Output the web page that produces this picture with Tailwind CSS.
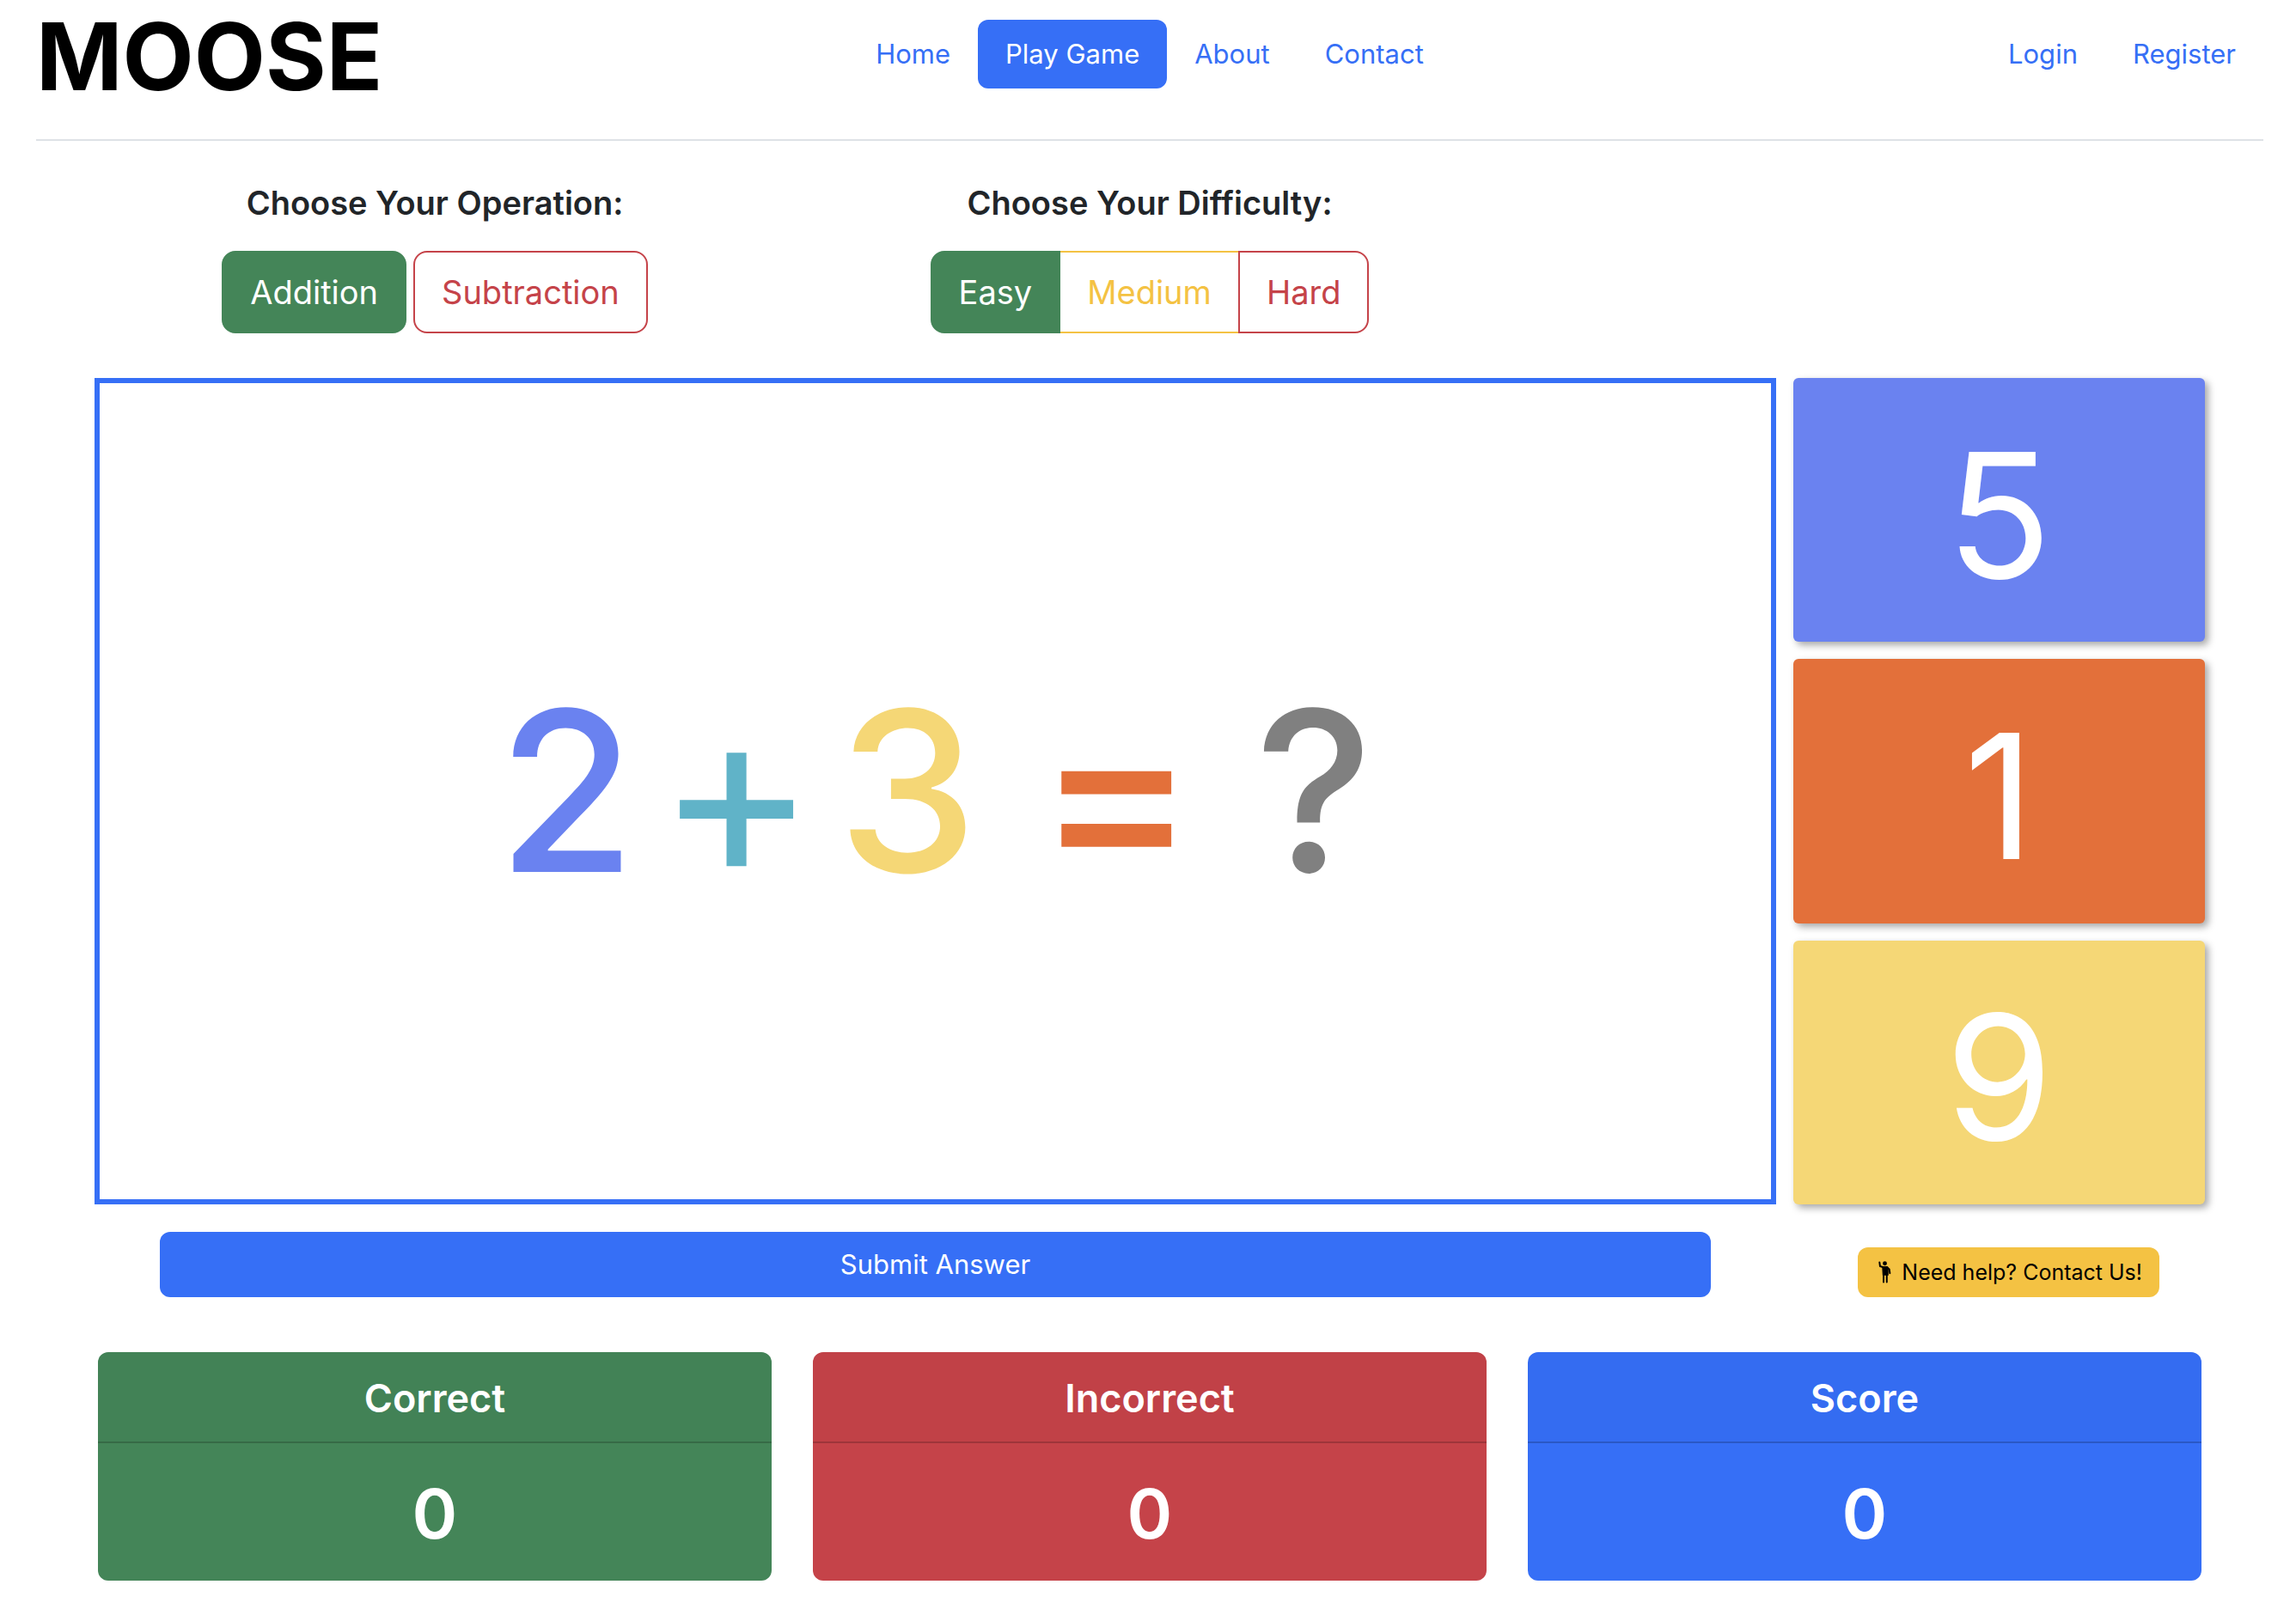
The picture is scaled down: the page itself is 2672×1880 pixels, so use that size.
<!DOCTYPE html>
<html lang="en">
<head>
<meta charset="utf-8">
<meta name="viewport" content="width=device-width, initial-scale=1">
<title>MOOSE - Play Game</title>
<script src="https://cdn.jsdelivr.net/npm/@tailwindcss/browser@4"></script>
</head>
<body class="bg-white pr-[38px] pb-10 pl-[42px] font-['Inter',sans-serif] text-[#212529]">

<header class="grid grid-cols-[1fr_auto_1fr] items-start border-b-2 border-[#dee2e6] pb-[30px]">
  <h1 class="text-[108px] leading-[132px] font-bold text-black">MOOSE</h1>
  <nav class="mt-[23px] flex text-[31px] leading-[48px] text-[#366ff6]" aria-label="Main">
    <a href="#" class="rounded-xl px-8 py-4">Home</a>
    <a href="#" class="rounded-xl bg-[#366ff6] px-8 py-4 text-white" aria-current="page">Play Game</a>
    <a href="#" class="rounded-xl px-8 py-4">About</a>
    <a href="#" class="rounded-xl px-8 py-4">Contact</a>
  </nav>
  <nav class="mt-[23px] flex justify-end text-[31px] leading-[48px] text-[#366ff6]" aria-label="Account">
    <a href="#" class="px-8 py-4">Login</a>
    <a href="#" class="px-8 py-4">Register</a>
  </nav>
</header>

<main>
  <section class="mx-12 mt-12 grid grid-cols-3 text-center">
    <div>
      <h2 class="text-[38px] leading-[48px] font-semibold">Choose Your Operation:</h2>
      <div class="mt-8 flex justify-center gap-2 text-[38px] leading-[60px]">
        <button type="button" class="rounded-2xl border-2 border-[#448558] bg-[#448558] px-[31px] py-4 text-white">Addition</button>
        <button type="button" class="rounded-2xl border-2 border-[#c54349] px-[31px] py-4 text-[#c54349]">Subtraction</button>
      </div>
    </div>
    <div>
      <h2 class="text-[38px] leading-[48px] font-semibold">Choose Your Difficulty:</h2>
      <div class="mt-8 flex justify-center text-[38px] leading-[60px]">
        <button type="button" class="z-10 rounded-l-2xl border-2 border-[#448558] bg-[#448558] px-[31px] py-4 text-white">Easy</button>
        <button type="button" class="-ml-0.5 border-2 border-[#f4c243] px-[31px] py-4 text-[#f4c243]">Medium</button>
        <button type="button" class="-ml-0.5 rounded-r-2xl border-2 border-[#c54349] px-[31px] py-4 text-[#c54349]">Hard</button>
      </div>
    </div>
  </section>

  <section class="mx-[68px] mt-[52px] grid grid-cols-[1957fr_479fr] gap-x-5 gap-y-8">
    <div class="flex items-center justify-center gap-[68px] border-6 border-[#366ff6] text-[260px] leading-none font-medium">
      <div class="flex items-center gap-[25px]">
        <span class="text-[#6a82f0]">2</span>
        <span class="text-[280px] font-normal text-[#60b3c8]">+</span>
        <span class="text-[#f5d776]">3</span>
      </div>
      <span class="text-[280px] text-[#e3703a]">=</span>
      <span class="text-[#808080]">?</span>
    </div>
    <div class="flex min-h-[962px] flex-col gap-5 text-[202px] leading-none text-white">
      <button type="button" class="flex-1 rounded-md bg-[#6a82f0] pt-3 shadow-[4px_4px_8px_rgba(0,0,0,0.35)]">5</button>
      <button type="button" class="flex-1 rounded-md bg-[#e3703a] pt-3 shadow-[4px_4px_8px_rgba(0,0,0,0.35)]">1</button>
      <button type="button" class="flex-1 rounded-md bg-[#f5d776] pt-3 shadow-[4px_4px_8px_rgba(0,0,0,0.35)]">9</button>
    </div>
    <div class="px-[76px]">
      <button type="button" class="w-full rounded-xl bg-[#366ff6] py-3.5 text-[31px] leading-[48px] text-white">Submit Answer</button>
    </div>
    <div class="flex items-end justify-end pr-[53px]">
      <a href="#" class="flex items-center gap-3 rounded-xl bg-[#f4c243] py-[11px] pr-5 pl-6 text-[25px] leading-9 text-black">
        <svg class="h-[26px] w-[15px]" viewBox="70 54 46 79" fill="none" stroke="currentColor" stroke-linecap="round" stroke-linejoin="round" aria-hidden="true">
          <circle cx="93" cy="62" r="7.5" fill="currentColor" stroke="none"/>
          <path d="M74 58l2 14 12 4h13l8 7 2 14" stroke-width="6"/>
          <path d="M83 73h21l2 6v26H85z" fill="currentColor" stroke="none"/>
          <path d="M88.500 100v29M100 100v29" stroke-width="6"/>
        </svg>
        Need help? Contact Us!
      </a>
    </div>
  </section>

  <section class="mx-[72px] mt-16 grid grid-cols-3 gap-12 text-center text-white">
    <div class="overflow-hidden rounded-xl bg-[#448558]">
      <h3 class="border-b-2 border-black/18 bg-black/2 pt-[26px] pb-[22px] text-[45px] leading-[56px] font-semibold">Correct</h3>
      <p class="pt-[34px] pb-[30px] text-[80px] leading-[96px] font-semibold">0</p>
    </div>
    <div class="overflow-hidden rounded-xl bg-[#c54349]">
      <h3 class="border-b-2 border-black/18 bg-black/2 pt-[26px] pb-[22px] text-[45px] leading-[56px] font-semibold">Incorrect</h3>
      <p class="pt-[34px] pb-[30px] text-[80px] leading-[96px] font-semibold">0</p>
    </div>
    <div class="overflow-hidden rounded-xl bg-[#366ff6]">
      <h3 class="border-b-2 border-black/18 bg-black/2 pt-[26px] pb-[22px] text-[45px] leading-[56px] font-semibold">Score</h3>
      <p class="pt-[34px] pb-[30px] text-[80px] leading-[96px] font-semibold">0</p>
    </div>
  </section>
</main>
</body>
</html>
